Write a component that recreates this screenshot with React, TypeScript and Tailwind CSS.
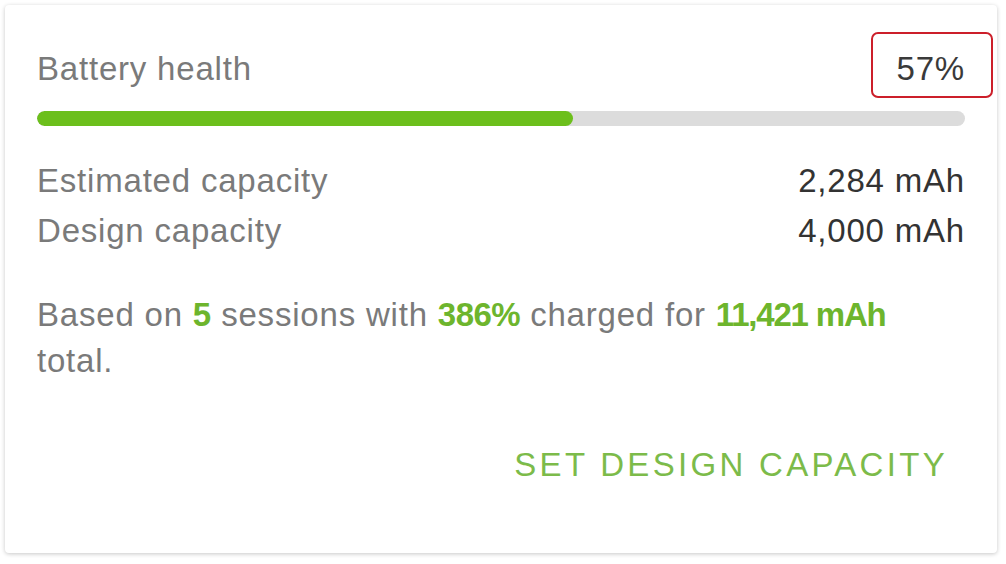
import React from 'react';

const health = 57.8;

function Row({ label, value }: { label: string; value: string }) {
    return (
        <div className="flex items-center justify-between leading-[50px]">
            <span className="text-[#7a7a7a]">{label}</span>
            <span className="text-[#333333]">{value}</span>
        </div>
    );
}

export default function App() {
    return (
        <div className="min-h-[564px] w-[1006px] bg-white pt-[5px] pl-[5px]" style={{ fontFamily: '"Liberation Sans", Arial, sans-serif' }}>
            <div className="w-[992px] h-[548px] bg-white rounded-[4px] shadow-[0_1px_4px_rgba(0,0,0,0.22)] px-8 pt-[44px] text-[33px] tracking-[0.8px]">
                {/* Header */}
                <div className="flex items-center justify-between leading-[40px]">
                    <span className="text-[#7a7a7a]">Battery health</span>
                    <span className="relative text-[#3a3a3a]">
                        57%
                        <span className="absolute -left-[26px] -right-[28px] -top-[17px] -bottom-[9px] border-2 border-[#cc1f2a] rounded-[7px]" />
                    </span>
                </div>

                {/* Progress bar */}
                <div className="mt-[22px] h-[15px] w-full rounded-full bg-[#dcdcdc] overflow-hidden">
                    <div className="h-full rounded-full bg-[#6cbf1c]" style={{ width: `${health}%` }} />
                </div>

                {/* Capacities */}
                <div className="mt-[30px]">
                    <Row label="Estimated capacity" value="2,284 mAh" />
                    <Row label="Design capacity" value="4,000 mAh" />
                </div>

                <p className="mt-[36px] leading-[46px] text-[#7a7a7a]">
                    Based on <span className="font-semibold text-[#6db52d] tracking-[0px]">5</span> sessions with{' '}
                    <span className="font-semibold text-[#6db52d] tracking-[-0.5px]">386%</span> charged for{' '}
                    <span className="font-semibold text-[#6db52d] tracking-[-1.2px]">11,421 mAh</span> total.
                </p>

                <div className="mt-[61px] flex justify-end pr-[17px]">
                    <button className="leading-[40px] tracking-[3.3px] text-[#7cbb4a] uppercase">
                        Set design capacity
                    </button>
                </div>
            </div>
        </div>
    );
}
